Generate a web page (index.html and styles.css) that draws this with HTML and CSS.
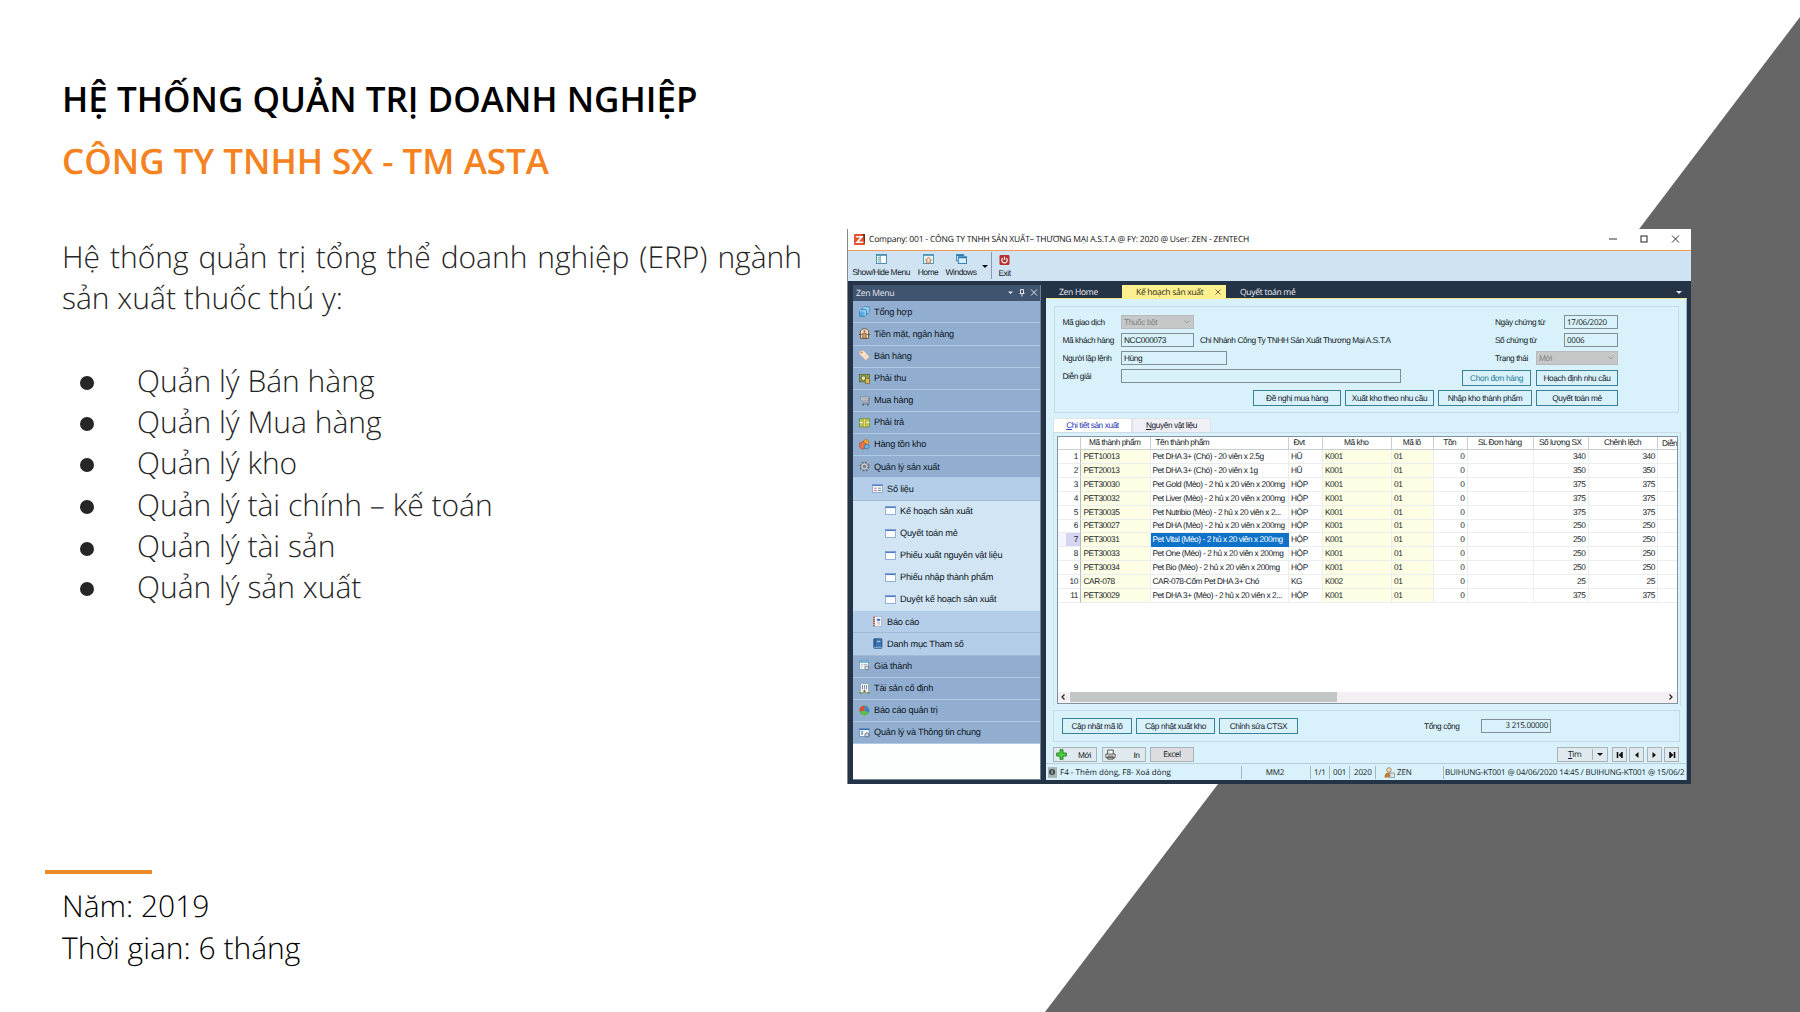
FILE: index.html
```html
<!DOCTYPE html>
<html lang="vi">
<head>
<meta charset="utf-8">
<title>Hệ thống quản trị doanh nghiệp - ASTA</title>
<link rel="stylesheet" href="styles.css">
</head>
<body>
<svg class="defs" width="0" height="0">
  <symbol id="win" viewBox="0 0 16 13"><rect x=".5" y=".5" width="15" height="12" fill="#fff" stroke="#6f92c4"/><path d="M1 2h14" stroke="#4f7fc4" stroke-width="2"/></symbol>
  <symbol id="form" viewBox="0 0 16 13"><rect x=".5" y=".5" width="15" height="12" fill="#fff" stroke="#6f92c4"/><path d="M1 2h14" stroke="#4f7fc4" stroke-width="2"/><path d="M3 6h4M3 9.500h4" stroke="#c06a6a" stroke-width="1.400"/><path d="M8.500 6h5M8.500 9.500h5" stroke="#6c7f9c" stroke-width="1.400"/></symbol>
  <symbol id="cubes" viewBox="0 0 16 16"><path d="M5 3l2-2h8v8l-2 2H5z" fill="#9fd3f3" stroke="#2b7db8"/><path d="M1 7l2-2h8v8l-2 2H1z" fill="#5bb0e4" stroke="#1f6fae"/><path d="M1 7h8v8M9 7l2-2" fill="none" stroke="#d6effc"/></symbol>
  <symbol id="bank" viewBox="0 0 16 16"><path d="M2 15V6c0-3 3-5 6-5s6 2 6 5v9z" fill="#f4e8cf" stroke="#6c4a2f" stroke-width="1.300"/><rect x="5.500" y="8" width="5" height="7" fill="#c9a06c" stroke="#6c4a2f"/><circle cx="8" cy="5" r="1.700" fill="#b8553f"/><path d="M0 9.500h4M12 9.500h4" stroke="#6c4a2f" stroke-width="1.500"/></symbol>
  <symbol id="tag" viewBox="0 0 16 16"><path d="M1 2l6-1 8 9-5 5-9-9z" fill="#fbeee0" stroke="#dcae86"/><circle cx="4" cy="4" r="1.600" fill="#e5873f"/><path d="M6 7l5 5M8 6l4 5" stroke="#e7b78f"/></symbol>
  <symbol id="cash" viewBox="0 0 16 16"><rect x=".7" y="2" width="14.600" height="11" fill="#86a24c" stroke="#4d5f28"/><circle cx="6.500" cy="7.500" r="3.300" fill="#efe3b0" stroke="#4c4a2a"/><rect x="9.500" y="8" width="6" height="7" fill="#d8bd58" stroke="#79622a"/></symbol>
  <symbol id="cart" viewBox="0 0 16 16"><path d="M1 3h14l-2 7H5z" fill="#e2e5e8" stroke="#70767e"/><path d="M4 5.500h10M5 7.700h8M15 3v10H5" fill="none" stroke="#70767e"/><circle cx="6" cy="14" r="1.300" fill="#555"/><circle cx="13" cy="14" r="1.300" fill="#555"/></symbol>
  <symbol id="pay" viewBox="0 0 16 16"><rect x=".7" y="2.500" width="14.600" height="12" fill="#a9cd5b" stroke="#5f8432"/><path d="M1 8h14" stroke="#f3f0c0" stroke-width="2"/><rect x="6" y="2.500" width="4" height="12" fill="#f2d364" stroke="#a68930"/></symbol>
  <symbol id="stock" viewBox="0 0 16 16"><circle cx="10" cy="5" r="4.200" fill="#f0a53c" stroke="#b56a19"/><path d="M1 6l5-2 4 3v6l-5 2-4-3z" fill="#e7744b" stroke="#a84527"/><circle cx="11.500" cy="11" r="3.500" fill="#6cb3e6" stroke="#2f6da0"/></symbol>
  <symbol id="gear" viewBox="0 0 16 16"><circle cx="8" cy="8" r="6.300" fill="none" stroke="#62676e" stroke-width="2" stroke-dasharray="2.500 2.450"/><circle cx="8" cy="8" r="5" fill="#dcdfe2" stroke="#70757c"/><circle cx="8" cy="8" r="2.200" fill="#8b9096" stroke="#5c6167"/></symbol>
  <symbol id="report" viewBox="0 0 16 16"><path d="M3 1h11v14H3z" fill="#fff" stroke="#9aa8bc"/><path d="M3 1v14" stroke="#b84d3b" stroke-width="2.600" stroke-dasharray="2 1"/><rect x="7" y="4" width="5" height="3" fill="#3b73b9"/><path d="M7 9h5M7 11.500h5" stroke="#8493a8"/></symbol>
  <symbol id="book" viewBox="0 0 16 16"><rect x="2.500" y="1" width="12" height="14" rx="1" fill="#3c74b0" stroke="#234d7c"/><path d="M4.500 1v12" stroke="#1e436e"/><rect x="7" y="4" width="5" height="2" fill="#9cc4ea"/><path d="M3 13.500h11" stroke="#b9d3ea"/></symbol>
  <symbol id="sheet" viewBox="0 0 16 16"><rect x=".7" y="1.500" width="13" height="12.500" fill="#fff" stroke="#5794bb"/><path d="M1 3h12.500" stroke="#4aa0c8" stroke-width="2"/><path d="M3 6.500h2M3 9h2M3 11.500h2M6.500 6.500h5M6.500 9h3" stroke="#8390a0"/><circle cx="11.500" cy="11.500" r="2.900" fill="#dde0e3" stroke="#6c7178" stroke-width="1.300"/></symbol>
  <symbol id="house" viewBox="0 0 16 16"><rect x="2" y="1" width="12" height="13" fill="#f6f8fb" stroke="#8d99a8"/><path d="M5 3v6M8 3v6M11 3v6" stroke="#7a8fae" stroke-width="1.500"/><rect x="6.500" y="10" width="3" height="4" fill="#8b6a48"/><path d="M0 14.500h5M11 14.500h5" stroke="#6aa446" stroke-width="2"/></symbol>
  <symbol id="pie" viewBox="0 0 16 16"><circle cx="8" cy="8" r="7.300" fill="#5cbb4e"/><path d="M8 8V.7a7.300 7.300 0 0 1 6.300 10.500z" fill="#3f86d2"/><path d="M8 8L.8 9.500A7.300 7.300 0 0 1 8 .7z" fill="#dd4a38"/></symbol>
  <symbol id="info" viewBox="0 0 16 16"><rect x=".7" y="2" width="14" height="12" fill="#fff" stroke="#4f7fae"/><path d="M1 3.500h13.500" stroke="#2f6dae" stroke-width="2"/><path d="M3 7h3M3 10h3" stroke="#3a79b5" stroke-width="2"/><circle cx="11.500" cy="11.500" r="3" fill="#d4d9de" stroke="#51657b" stroke-width="1.300"/></symbol>
</svg>
<main class="slide">
  <div class="wedge"></div>
  <section class="copy">
    <h1 class="title">HỆ THỐNG QUẢN TRỊ DOANH NGHIỆP</h1>
    <h2 class="title client">CÔNG TY TNHH SX - TM ASTA</h2>
    <p class="lead">Hệ thống quản trị tổng thể doanh nghiệp (ERP) ngành sản xuất thuốc thú y:</p>
    <ul class="modules">
      <li>Quản lý Bán hàng</li>
      <li>Quản lý Mua hàng</li>
      <li>Quản lý kho</li>
      <li class="gap">Quản lý tài chính – kế toán</li>
      <li>Quản lý tài sản</li>
      <li>Quản lý sản xuất</li>
    </ul>
    <div class="rule"></div>
    <div class="facts"><p>Năm: 2019</p><p>Thời gian: 6 tháng</p></div>
  </section>

  <section class="window">
    <div class="titlebar">
      <svg class="logo" viewBox="0 0 12 12"><rect width="12" height="12" rx="1" fill="#e4512d"/><path d="M9.500 0H12v12z" fill="#5d2f2c"/><path d="M2 3h6.500L3.500 9H10" fill="none" stroke="#fff" stroke-width="1.900"/></svg>
      <span class="caption">Company: 001 - CÔNG TY TNHH SẢN XUẤT– THƯƠNG MẠI A.S.T.A @ FY: 2020 @ User: ZEN - ZENTECH</span>
      <svg class="controls" viewBox="0 0 72 10"><path d="M1 5h8M64 1.500l7 7M71 1.500l-7 7" fill="none" stroke="#333"/><rect x="33" y="2" width="6" height="6" fill="none" stroke="#222"/></svg>
    </div>
    <div class="toolbar">
      <div class="tool t1"><svg viewBox="0 0 12 11"><rect x=".5" y=".5" width="11" height="10" fill="#fff" stroke="#3e86a8"/><path d="M.5 1.500h11M4.500 2v8" stroke="#3e86a8"/><path d="M2 4h1.500M2 6h1.500M2 8h1.500" stroke="#3aa05a"/></svg><span>Show/Hide Menu</span></div>
      <div class="tool t2"><svg viewBox="0 0 12 11"><rect x=".5" y=".5" width="11" height="10" fill="#e8f4fa" stroke="#4a94b5"/><path d="M.5 1.500h11" stroke="#3e86a8"/><path d="M2.500 7L6 3.500 9.500 7M4 6v4h4V6" fill="#f7ddbc" stroke="#c0703b"/></svg><span>Home</span></div>
      <div class="tool t3"><svg viewBox="0 0 12 11"><rect x=".5" y=".5" width="8" height="7" fill="#d9eefb" stroke="#3b85b6"/><rect x="2.500" y="3" width="9" height="7.500" fill="#d9eefb" stroke="#2f7bb0"/><path d="M2.500 4h9M1 1.500h7" stroke="#2f7bb0" stroke-width="1.400"/></svg><span>Windows</span></div>
      <i class="caret dark"></i>
      <div class="tool t4"><svg viewBox="0 0 12 11"><rect x=".5" width="11" height="11" rx="1.500" fill="#b7302b"/><path d="M4 3.500a3 3 0 1 0 4 0M6 1.800V5.500" fill="none" stroke="#fff" stroke-width="1.300"/></svg><span>Exit</span></div>
    </div>
    <div class="workspace">
      <nav class="menu">
        <div class="menu-head"><span>Zen Menu</span><svg viewBox="0 0 30 9"><path d="M0 3.500h5L2.500 6z" fill="#dfe6ee"/><path d="M12.500 1.500v4M15.500 1.500v4M11.500 5.500h5M12.500 1.500h3M14 5.500v3M23 1.500l6 6M29 1.500l-6 6" fill="none" stroke="#dfe6ee"/></svg></div>
        <ul>
          <li><svg><use href="#cubes"/></svg>Tổng hợp</li>
          <li><svg><use href="#bank"/></svg>Tiền mặt, ngân hàng</li>
          <li><svg><use href="#tag"/></svg>Bán hàng</li>
          <li><svg><use href="#cash"/></svg>Phải thu</li>
          <li><svg><use href="#cart"/></svg>Mua hàng</li>
          <li><svg><use href="#pay"/></svg>Phải trả</li>
          <li><svg><use href="#stock"/></svg>Hàng tồn kho</li>
          <li><svg><use href="#gear"/></svg>Quản lý sản xuất</li>
          <li class="sub"><svg><use href="#form"/></svg>Số liệu</li>
          <li class="leaf"><svg><use href="#win"/></svg>Kế hoạch sản xuất</li>
          <li class="leaf"><svg><use href="#win"/></svg>Quyết toán mẻ</li>
          <li class="leaf"><svg><use href="#win"/></svg>Phiếu xuất nguyên vật liệu</li>
          <li class="leaf"><svg><use href="#win"/></svg>Phiếu nhập thành phẩm</li>
          <li class="leaf"><svg><use href="#win"/></svg>Duyệt kế hoạch sản xuất</li>
          <li class="sub"><svg><use href="#report"/></svg>Báo cáo</li>
          <li class="sub"><svg><use href="#book"/></svg>Danh mục Tham số</li>
          <li><svg><use href="#sheet"/></svg>Giá thành</li>
          <li><svg><use href="#house"/></svg>Tài sản cố định</li>
          <li><svg><use href="#pie"/></svg>Báo cáo quản trị</li>
          <li><svg><use href="#info"/></svg>Quản lý và Thông tin chung</li>
        </ul>
      </nav>
      <div class="doc">
        <div class="tabs"><span class="tab home">Zen Home</span><span class="tab active">Kế hoạch sản xuất<svg viewBox="0 0 6 6"><path d="M.5.500l5 5M5.500.500l-5 5" stroke="#6b6440" fill="none"/></svg></span><span class="tab last">Quyết toán mẻ</span><i class="caret"></i></div>
        <div class="page">
          <div class="group header-form">
            <div class="form-cols">
              <div class="col-left">
                <div class="row"><label>Mã giao dịch</label><span class="combo w73">Thuốc bột<svg viewBox="0 0 6 4"><path d="M.5.500L3 3 5.500.500" fill="none" stroke="#999"/></svg></span></div>
                <div class="row"><label>Mã khách hàng</label><span class="field w73">NCC000073</span><span class="partner">Chi Nhánh Công Ty TNHH Sản Xuất Thương Mại A.S.T.A</span></div>
                <div class="row"><label>Người lập lệnh</label><span class="field w106">Hùng</span></div>
                <div class="row"><label>Diễn giải</label><span class="field w280"></span></div>
              </div>
              <div class="col-right">
                <div class="row"><label>Ngày chứng từ</label><span class="field w54 ui">17/06/2020</span></div>
                <div class="row"><label>Số chứng từ</label><span class="field w54 ui">0006</span></div>
                <div class="row"><label>Trạng thái</label><span class="combo w82">Mới<svg viewBox="0 0 6 4"><path d="M.5.500L3 3 5.500.500" fill="none" stroke="#999"/></svg></span></div>
                <div class="row btns"><span class="btn w69 teal">Chọn đơn hàng</span><span class="btn w82">Hoạch định nhu cầu</span></div>
              </div>
            </div>
            <div class="actions"><span class="btn w88">Đề nghị mua hàng</span><span class="btn w89">Xuất kho theo nhu cầu</span><span class="btn w94">Nhập kho thành phẩm</span><span class="btn w82">Quyết toán mẻ</span></div>
          </div>
          <div class="subtabs"><span class="on"><u>C</u>hi tiết sản xuất</span><span><u>N</u>guyên vật liệu</span></div>
          <div class="gridbox"><div class="grid">
            <div class="gr gh"><b></b><b>Mã thành phẩm</b><b class="l">Tên thành phẩm</b><b class="l">Đvt</b><b>Mã kho</b><b>Mã lô</b><b>Tồn</b><b>SL Đơn hàng</b><b>Số lượng SX</b><b>Chênh lệch</b><b class="l cut">Diễn</b></div>
            <div class="gr"><i>1</i><i>PET10013</i><i>Pet DHA 3+ (Chó) - 20 viên x 2.5g</i><i>HŨ</i><i>K001</i><i>01</i><i>0</i><i></i><i>340</i><i>340</i><i></i></div>
            <div class="gr"><i>2</i><i>PET20013</i><i>Pet DHA 3+ (Chó) - 20 viên x 1g</i><i>HŨ</i><i>K001</i><i>01</i><i>0</i><i></i><i>350</i><i>350</i><i></i></div>
            <div class="gr"><i>3</i><i>PET30030</i><i>Pet Gold (Mèo) - 2 hủ x 20 viên x 200mg</i><i>HỘP</i><i>K001</i><i>01</i><i>0</i><i></i><i>375</i><i>375</i><i></i></div>
            <div class="gr"><i>4</i><i>PET30032</i><i>Pet Liver (Mèo) - 2 hủ x 20 viên x 200mg</i><i>HỘP</i><i>K001</i><i>01</i><i>0</i><i></i><i>375</i><i>375</i><i></i></div>
            <div class="gr"><i>5</i><i>PET30035</i><i>Pet Nutribio (Mèo) - 2 hủ x 20 viên x 2...</i><i>HỘP</i><i>K001</i><i>01</i><i>0</i><i></i><i>375</i><i>375</i><i></i></div>
            <div class="gr"><i>6</i><i>PET30027</i><i>Pet DHA (Mèo) - 2 hủ x 20 viên x 200mg</i><i>HỘP</i><i>K001</i><i>01</i><i>0</i><i></i><i>250</i><i>250</i><i></i></div>
            <div class="gr sel"><i>7</i><i>PET30031</i><i>Pet Vital (Mèo) - 2 hủ x 20 viên x 200mg</i><i>HỘP</i><i>K001</i><i>01</i><i>0</i><i></i><i>250</i><i>250</i><i></i></div>
            <div class="gr"><i>8</i><i>PET30033</i><i>Pet One (Mèo) - 2 hủ x 20 viên x 200mg</i><i>HỘP</i><i>K001</i><i>01</i><i>0</i><i></i><i>250</i><i>250</i><i></i></div>
            <div class="gr"><i>9</i><i>PET30034</i><i>Pet Bio (Mèo) - 2 hủ x 20 viên x 200mg</i><i>HỘP</i><i>K001</i><i>01</i><i>0</i><i></i><i>250</i><i>250</i><i></i></div>
            <div class="gr"><i>10</i><i>CAR-078</i><i>CAR-078-Cốm Pet DHA 3+ Chó</i><i>KG</i><i>K002</i><i>01</i><i>0</i><i></i><i>25</i><i>25</i><i></i></div>
            <div class="gr"><i>11</i><i>PET30029</i><i>Pet DHA 3+ (Mèo) - 2 hủ x 20 viên x 2...</i><i>HỘP</i><i>K001</i><i>01</i><i>0</i><i></i><i>375</i><i>375</i><i></i></div>
            <div class="scroll"><svg viewBox="0 0 4 6"><path d="M3.500.500L1 3l2.500 2.500" fill="none" stroke="#222" stroke-width="1.200"/></svg><span class="thumb"></span><svg class="end" viewBox="0 0 4 6"><path d="M.5.500L3 3 .5 5.500" fill="none" stroke="#222" stroke-width="1.200"/></svg></div>
          </div></div>
          <div class="group totals"><span class="btn w70">Cập nhật mã lô</span><span class="btn w79">Cập nhật xuất kho</span><span class="btn w79">Chỉnh sửa CTSX</span><label>Tổng cộng</label><span class="field w70 ui">3 215.00000</span></div>
          <div class="cmds">
            <span class="cmd"><svg viewBox="0 0 11 11"><path d="M4 .7h3V4h3.300v3H7v3.300H4V7H.7V4H4z" fill="#4fcf42" stroke="#27862a"/></svg>Mới</span>
            <span class="cmd"><svg viewBox="0 0 12 11"><path d="M3 5V.7h6V5M1 5h10v4H1zM3 8h6v2.500H3z" fill="#fff" stroke="#444"/><path d="M2.500 6.500h7" stroke="#999"/></svg>In</span>
            <span class="cmd excel">Excel</span>
            <span class="cmd find"><em><u>T</u>ìm</em><i class="caret dark"></i></span>
            <span class="cmd nav"><svg viewBox="0 0 8 8"><path d="M1.500 1v6M6 1v6" stroke="#111" stroke-width="1.600"/><path d="M6 1v6L2.500 4z" fill="#111"/></svg></span>
            <span class="cmd nav"><svg viewBox="0 0 8 8"><path d="M5.500 1v6L2 4z" fill="#111"/></svg></span>
            <span class="cmd nav"><svg viewBox="0 0 8 8"><path d="M2.500 1v6L6 4z" fill="#111"/></svg></span>
            <span class="cmd nav"><svg viewBox="0 0 8 8"><path d="M6.500 1v6M2 1v6" stroke="#111" stroke-width="1.600"/><path d="M2 1v6l3.500-3z" fill="#111"/></svg></span>
          </div>
          <div class="status">
            <span class="s0"><svg viewBox="0 0 10 12"><rect width="10" height="12" fill="#a9b5b5"/><circle cx="4.500" cy="5.500" r="3.300" fill="#37474a"/><path d="M4.500 3.500v4" stroke="#dfe" /></svg>F4 - Thêm dòng, F8- Xoá dòng</span><span class="s1">MM2</span><span class="s2">1/1</span><span class="s3">001</span><span class="s4">2020</span><span class="s5"><svg viewBox="0 0 11 11"><circle cx="5" cy="3" r="2.300" fill="#f0d9ba" stroke="#8b6a4a" stroke-width=".7"/><path d="M.5 10.500c0-4 2-5 4.500-5s4.500 1 5 5z" fill="#c0782f"/><rect x="6" y="6" width="4.500" height="4.500" fill="#dfe3e6" stroke="#9aa"/></svg>ZEN</span><span class="s6">BUIHUNG-KT001 @ 04/06/2020 14:45 / BUIHUNG-KT001 @ 15/06/2</span>
          </div>
        </div>
      </div>
    </div>
  </section>
</main>
</body>
</html>
```
FILE: styles.css
```css
* { box-sizing: border-box; }
body { margin: 0; background: #fff; font-family: "Open Sans", sans-serif; text-rendering: geometricPrecision; }
h1, h2, p, ul { margin: 0; padding: 0; list-style: none; }
i, em, b { font-style: normal; font-weight: 400; }
svg { display: block; flex: none; }
.defs { position: absolute; }

.slide { position: relative; width: 1800px; height: 1012px; overflow: hidden; display: grid; grid-template-columns: 847px 844px; align-items: start; }
.wedge { position: absolute; inset: 0; background: #666; clip-path: polygon(1800px 17px, 1800px 1012px, 1045px 1012px); }

/* Text column */
.copy { display: flex; flex-direction: column; padding: 68.500px 45px 0 62px; height: 1012px; }
.title { font-size: 35px; line-height: 62px; font-weight: 600; color: #000; white-space: nowrap; }
.client { color: #f58220; }
.lead { margin-top: 43.500px; font-size: 30px; line-height: 41.200px; font-weight: 300; color: #262626; text-align: justify; }
.modules { margin-top: 41.200px; font-size: 30px; line-height: 41.200px; font-weight: 300; color: #262626; }
.modules li { display: flex; align-items: center; gap: 43px; padding-left: 18px; }
.modules li::before { content: ""; width: 14px; height: 14px; border-radius: 50%; background: #262626; margin-top: 5px; }
.modules .gap { padding-top: 1px; }
.modules li:last-child { margin-top: -.5px; }
.rule { width: 107px; height: 4px; background: #ee8a2a; margin: auto 0 0 -17px; }
.facts { margin: 11px 0 42.500px; font-size: 30px; line-height: 42.300px; font-weight: 300; color: #000; }

/* Application window */
.window { position: relative; margin-top: 229px; width: 844px; height: 555px; display: flex; flex-direction: column; background: #253347; border-left: 1px solid #85898f; font: 8.300px "Liberation Sans", sans-serif; letter-spacing: -.41px; color: #141b26; overflow: hidden; white-space: nowrap; }
.titlebar { height: 22px; display: flex; align-items: center; background: #fff; border-bottom: 1.500px solid #f09a55; padding: 0 11px 1px 6px; }
.logo { width: 11px; height: 11px; }
.caption { margin-left: 4px; font: 8.500px "Open Sans", sans-serif; letter-spacing: -.2px; color: #111; }
.controls { width: 72px; height: 10px; margin-left: auto; }
.toolbar { height: 30px; display: flex; align-items: center; background: #d0e3f3; font-size: 8.500px; letter-spacing: -.5px; padding-bottom: 2px; }
.tool { display: flex; flex-direction: column; align-items: center; gap: 3px; padding-top: 1px; }
.tool svg { width: 11px; height: 10px; }
.t1 { margin-left: 4px; width: 58px; }
.t2 { margin-left: 8px; width: 20px; }
.t3 { margin-left: 7px; width: 32px; }
.t4 { margin-left: 3px; width: 26px; height: 27px; border-left: 1px solid #8a9aab; padding-top: 3px; }
.caret { width: 0; height: 0; border: 2.500px solid transparent; border-top-color: #dfe6ee; border-bottom: 0; }
.caret.dark { border-top-color: #111; }
.toolbar .caret { margin: 3px 0 0 5px; border-width: 3px 3px 0; }

.workspace { flex: 1; min-height: 0; display: flex; gap: 5px; padding: 4px 4px 4px 5px; }
.menu { width: 188px; background: #fdfefe; border: 1px solid #708296; border-width: 0 1px 1px 0; }
.menu-head { height: 16.300px; display: flex; align-items: center; justify-content: space-between; padding: 0 2px 1px 3px; background: #41546f; color: #e4eaf1; font: 8.600px "Open Sans", sans-serif; letter-spacing: -.27px; }
.menu-head svg { width: 30px; height: 9px; }
.menu li { height: 22.150px; display: flex; align-items: center; gap: 4px; padding: 0 0 .5px 6px; background: #91aed0; border-bottom: 1px solid #aecbe5; font-size: 9.200px; letter-spacing: -.21px; color: #0c1420; }
.menu li svg { width: 11px; height: 11px; }
.menu .sub { padding-left: 19px; background: #b4cde8; border-bottom-color: #a4b9d3; }
.menu .leaf { padding-left: 32px; background: #d1e5f5; border-bottom-color: #d1e5f5; }

.doc { flex: 1; min-width: 0; display: flex; flex-direction: column; }
.tabs { height: 14px; display: flex; align-items: center; font: 8.600px "Open Sans", sans-serif; letter-spacing: -.33px; color: #e9edf2; border-bottom: 1px solid #f3e58f; }
.tab.home { width: 76px; padding-left: 13px; }
.tab.active { width: 104px; height: 14px; padding: 0 5px 0 14px; display: flex; align-items: center; justify-content: space-between; background: #fdf08f; color: #2b2a1c; }
.tab svg { width: 6px; height: 6px; }
.tab.last { padding-left: 14px; }
.tabs .caret { margin: 2px 5px 0 auto; border-width: 3px 3px 0; }
.page { flex: 1; min-height: 0; display: flex; flex-direction: column; background: #d8f1fb; overflow: hidden; border-right: 1px solid #9fb6c6; }
.group { border: 1px solid #c3dde6; }
.header-form { margin: 7px 7px 0 8px; height: 107px; padding: 8px 60px 0 8px; }
.form-cols { display: flex; justify-content: space-between; }
.col-left, .col-right { display: flex; flex-direction: column; gap: 4px; }
.row { display: flex; align-items: center; height: 14px; }
.col-left label { width: 58px; margin-left: -.5px; margin-right: .5px; }
.col-right { width: 156px; }
.col-right label { margin-left: 33px; }
.col-right .field, .col-right .combo { margin-left: auto; }
.field, .combo { height: 14px; padding: 0 2px; display: flex; align-items: center; }
.field { border: 1px solid #7f8f96; color: #141a20; }
.combo { justify-content: space-between; background: #c6c8c8; border: 1px solid #b5babc; color: #7d8285; }
.combo svg { width: 6px; height: 4px; margin-right: 1px; }
.ui { font: 8px "Open Sans", sans-serif; letter-spacing: -.26px; }
.partner { margin-left: 6px; }
.btns { justify-content: space-between; height: 16px; margin-top: 1px; }
.btn { height: 16px; display: flex; align-items: center; justify-content: center; border: 1px solid #3a8096; color: #17212b; letter-spacing: -.37px; }
.teal { color: #267d9a; }
.w54 { width: 54px; } .w69 { width: 69px; } .w70 { width: 70px; } .w73 { width: 73px; } .w79 { width: 79px; } .w82 { width: 82px; } .w88 { width: 88px; } .w89 { width: 89px; } .w94 { width: 94px; } .w106 { width: 106px; } .w280 { width: 280px; }
.actions { display: flex; justify-content: flex-end; gap: 4px; margin-top: 4px; }

.subtabs { display: flex; margin: 4.500px 0 0 7px; height: 14.500px; }
.subtabs span { width: 79px; display: flex; align-items: center; justify-content: center; background: #f1eff6; border: 1px solid #dfe3ea; border-bottom: 0; }
.subtabs .on { background: #fff; color: #2a39b4; }
.gridbox { height: 273.500px; margin: 0 5px 0 7px; padding: 2.500px 2px 2px 3px; border: 1px solid #c8dde6; border-bottom: 0; }
.grid { height: 268px; display: flex; flex-direction: column; background: #fff; border: 1px solid #7f929e; overflow: hidden; }
.gr { display: grid; grid-template-columns: 23px 69.500px 138px 34px 69px 42px 34px 66px 55px 69.500px 20px; height: 13.850px; flex: none; }
.gr > * { display: flex; align-items: center; padding: 0 3px .5px 2.500px; border: 1px solid #ebeeee; border-width: 0 1px 1px 0; overflow: hidden; line-height: 12.500px; }
.gh > b { justify-content: center; border-color: #c9cfd3; letter-spacing: -.48px; }
.gh > .l { justify-content: flex-start; padding-left: 5px; }
.gh > b:nth-child(2) { justify-content: flex-end; padding-right: 9px; }
.gh > .cut { padding: 0 0 0 4px; border-right: 0; }
.gr > i:nth-child(1), .gr > i:nth-child(7), .gr > i:nth-child(9), .gr > i:nth-child(10) { justify-content: flex-end; padding-right: 2px; }
.gr > i:nth-child(1) { border-right-color: #b3babf; }
.gr > i:nth-child(2), .gr > i:nth-child(5), .gr > i:nth-child(6) { background: #fefee4; }
.gr > i:nth-child(3) { letter-spacing: -.44px; padding-right: 0; padding-left: 2px; }
.sel > i:nth-child(1) { background: linear-gradient(90deg, #f6f4fc 35%, #d5d5f1 35%); }
.sel > i:nth-child(3) { background: #0f72c9; color: #fff; border-color: #0f72c9; }
.scroll { margin-top: auto; height: 11px; display: flex; align-items: center; gap: 5px; padding: 0 4px 0 3px; background: #f3eff3; }
.scroll svg { width: 4px; height: 6px; }
.scroll .thumb { width: 267px; height: 10px; background: #c2c6c4; }
.scroll .end { margin-left: auto; }

.totals { margin: 4px 6px 0 7px; height: 32px; display: flex; align-items: center; gap: 4px; padding: 0 0 0 8px; }
.totals label { width: 35px; margin-left: 122px; }
.totals .field { margin-left: 18px; justify-content: flex-end; }
.cmds { display: flex; height: 15px; margin: 5.500px 7px 0 7px; }
.cmd { width: 44px; margin-right: 4.500px; display: flex; align-items: center; justify-content: space-between; padding: 0 5px 0 2px; border: 1px solid #a9b4b9; background: #e0e9ee; }
.cmd svg { width: 11px; height: 11px; }
.excel { justify-content: center; background: #dddce0; padding: 0; font-family: "Open Sans", sans-serif; }
.find { width: 51px; margin-left: auto; padding: 0 4px 0 0; font-family: "Open Sans", sans-serif; }
.find em { flex: 1; text-align: center; border-right: 1px solid #a9b4b9; margin-right: 4px; }
.find .caret { border-width: 3px 3px 0; }
.nav { width: 15px; margin-right: 2.300px; padding: 0; justify-content: center; }
.nav:last-child { margin-right: 0; }
.nav svg { width: 8px; height: 8px; }
.status { display: flex; align-items: center; height: 17px; margin-top: 1px; border-top: 1px solid #b9cdd6; font: 8px "Open Sans", sans-serif; letter-spacing: -.15px; }
.status span { height: 13px; display: flex; align-items: center; border-right: 1px solid #a9b8bf; }
.status .s0 { width: 196px; gap: 3px; padding-left: 2px; letter-spacing: .03px; }
.s0 svg { width: 9px; height: 11px; }
.status .s1 { width: 69px; justify-content: center; padding-right: 2px; }
.status .s2 { width: 19px; padding-left: 3px; }
.status .s3 { width: 20px; padding-left: 3px; }
.status .s4 { width: 26px; padding-left: 4px; }
.status .s5 { width: 68px; padding-left: 8px; gap: 2px; }
.s5 svg { width: 11px; height: 11px; }
.status .s6 { flex: 1; min-width: 0; padding-left: 1px; border: 0; overflow: hidden; }
```
